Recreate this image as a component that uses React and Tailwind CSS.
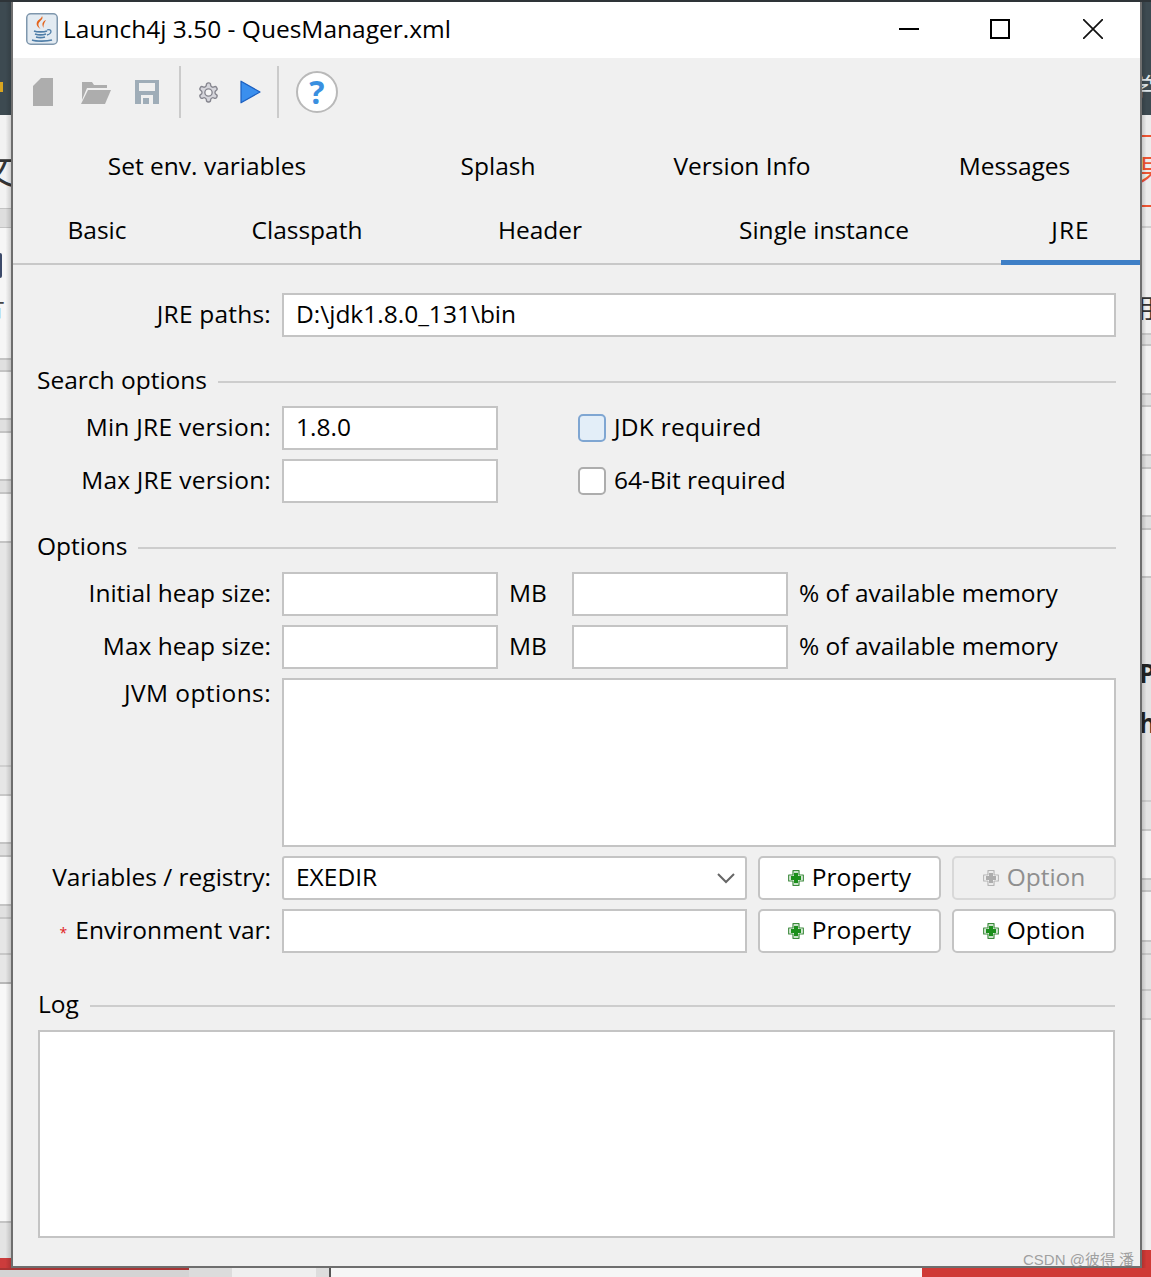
import React from 'react';

const labelCls = 'w-[258px] shrink-0 text-right mb-[2px]';
const boxCls = 'h-[44px] shrink-0 bg-white border-2 border-[#c4c4c4] px-[12px] pb-[2px] flex items-center';

// bands of the page behind the window, top to bottom
const leftBands = [
  'h-[93px] bg-[#f2f2f2]',
  'h-[20px] bg-[#dedede] border-y border-[#c4c4c4]',
  'h-[107px] bg-[#f6f6f6]',
  'h-[25px] bg-[#f6f6f6] border-b-2 border-[#c4c4c4]',
  'h-[12px] bg-[#e0e0e0] border-b-2 border-[#c4c4c4]',
  'h-[48px] bg-[#f6f6f6] border-b-2 border-[#c4c4c4]',
  'h-[13px] bg-[#e0e0e0] border-b-2 border-[#c4c4c4]',
  'h-[48px] bg-[#f6f6f6] border-b-2 border-[#c4c4c4]',
  'h-[13px] bg-[#e0e0e0] border-b-2 border-[#c4c4c4]',
  'h-[49px] bg-[#f6f6f6] border-b-2 border-[#c4c4c4]',
  'h-[224px] bg-[#e6e6e6] border-b-2 border-[#d0d0d0]',
  'h-[29px] bg-[#e6e6e6] border-b-2 border-[#c8c8c8]',
  'h-[48px] bg-[#f8f8f8] border-b-2 border-[#c4c4c4]',
  'h-[13px] bg-[#e0e0e0] border-b-2 border-[#c4c4c4]',
  'h-[49px] bg-[#f8f8f8] border-b-2 border-[#c4c4c4]',
  'h-[13px] bg-[#e0e0e0] border-b-2 border-[#c8c8c8]',
  'h-[36px] bg-[#e6e6e6] border-b-2 border-[#c8c8c8]',
  'h-[29px] bg-[#e6e6e6] border-b-2 border-[#b8b8b8]',
  'h-[239px] bg-[#f8f8f8] border-b-2 border-[#c4c4c4]',
  'h-[35px] bg-[#e4e4e4]',
  'h-[10px] bg-[#cc3c3c]',
];

const rightBands = [
  'h-[21px] bg-[#ececec] border-b-2 border-[#cfcfcf]',
  'h-[107px] bg-[#f0f0f0] border-b-2 border-[#c8c8c8]',
  'h-[11px] bg-[#e0e0e0] border-b-2 border-[#c4c4c4]',
  'h-[49px] bg-[#f2f2f2] border-b-2 border-[#c4c4c4]',
  'h-[12px] bg-[#e0e0e0] border-b-2 border-[#c4c4c4]',
  'h-[49px] bg-[#f2f2f2] border-b-2 border-[#c4c4c4]',
  'h-[13px] bg-[#e0e0e0] border-b-2 border-[#c4c4c4]',
  'h-[48px] bg-[#f2f2f2] border-b-2 border-[#c4c4c4]',
  'h-[13px] bg-[#e0e0e0] border-b-2 border-[#c4c4c4]',
  'h-[48px] bg-[#f2f2f2] border-b-2 border-[#c4c4c4]',
  'h-[224px] bg-[#e4e4e4] border-b-2 border-[#cccccc]',
  'h-[29px] bg-[#e4e4e4] border-b-2 border-[#c8c8c8]',
  'h-[49px] bg-[#f2f2f2] border-b-2 border-[#c4c4c4]',
  'h-[12px] bg-[#e0e0e0] border-b-2 border-[#c4c4c4]',
  'h-[50px] bg-[#f2f2f2] border-b-2 border-[#c4c4c4]',
  'h-[13px] bg-[#e2e2e2] border-b-2 border-[#c8c8c8]',
  'h-[36px] bg-[#e4e4e4] border-b-2 border-[#c8c8c8]',
  'h-[29px] bg-[#e4e4e4] border-b-2 border-[#c8c8c8]',
  'h-[230px] bg-[#f0f0f0]',
  'h-[18px] bg-[#cf3a36]',
];

const Plus = ({ disabled }) => {
  const fill = disabled ? '#adadad' : '#1c8f1c';
  const edge = disabled ? '#b4b4b4' : '#3c8a3c';
  return (
    <svg width="16" height="16" viewBox="0 0 16 16">
      <path d="M5 .7h6V5h4.300v6H11v4.300H5V11H.7V5H5z" fill="#fff" stroke={edge} strokeWidth="1.200" strokeLinejoin="round" />
      <path d="M6 2.800h4V6h3.200v4H10v3.200H6V10H2.800V6H6z" fill={fill} />
    </svg>
  );
};

const AddButton = ({ label, width, disabled }) => (
  <div className={`h-[44px] ${width} shrink-0 rounded-[5px] border-2 flex items-center justify-center gap-[8px] ${disabled ? 'bg-[#efefef] border-[#d8d8d8] text-[#8f8f8f]' : 'bg-white border-[#c4c4c4] text-black'}`}>
    <Plus disabled={disabled} />
    <span className="mb-[2px]">{label}</span>
  </div>
);

const Section = ({ title, className }) => (
  <div className={`flex items-center gap-[11px] h-[36px] ${className}`}>
    <span className="shrink-0 mb-[2px]">{title}</span>
    <div className="h-[2px] flex-1 bg-[#cdcdcd] mt-[2px]" />
  </div>
);

const Tab = ({ label, width }) => (
  <div className={`${width} h-[64px] flex items-center justify-center shrink-0`}>
    {label}
  </div>
);

const Toolbar = () => (
  <div className="h-[68px] flex items-center">
    <svg className="ml-[20px]" width="20" height="28" viewBox="0 0 20 28"><path d="M0 8 8 0h12v28H0z M8 0v8H0z" fill="#adadad" /></svg>
    <svg className="ml-[28px]" width="30" height="24" viewBox="0 0 30 24"><path d="M1 7V2h10l2 3h13v3H6L1 20z" fill="#adadad" /><path d="M7 10h23l-6 14H0z" fill="#adadad" /></svg>
    <svg className="ml-[24px]" width="24" height="24" viewBox="0 0 24 24"><path d="M0 0h24v24H0z" fill="#9fadb8" /><path d="M4 3h16v8H4z" fill="#f0f0f0" /><path d="M6 15h12v9H6z" fill="#f0f0f0" /><path d="M8 18h6v6H8z" fill="#9fadb8" /></svg>
    <div className="ml-[20px] w-[2px] h-[52px] bg-[#cbcbcb]" />
    <svg className="ml-[16px]" width="23" height="23" viewBox="0 0 24 24" fill="#d6d6dc" stroke="#85858e" strokeWidth="1.400" strokeLinejoin="round">
      <path d="M12.200 2h-.4a2 2 0 0 0-2 2v.2a2 2 0 0 1-1 1.700l-.4.3a2 2 0 0 1-2 0l-.2-.1a2 2 0 0 0-2.700.7l-.2.4a2 2 0 0 0 .7 2.700l.2.1a2 2 0 0 1 1 1.700v.5a2 2 0 0 1-1 1.700l-.2.1a2 2 0 0 0-.7 2.700l.2.4a2 2 0 0 0 2.700.7l.2-.1a2 2 0 0 1 2 0l.4.3a2 2 0 0 1 1 1.700v.2a2 2 0 0 0 2 2h.4a2 2 0 0 0 2-2v-.2a2 2 0 0 1 1-1.700l.4-.3a2 2 0 0 1 2 0l.2.1a2 2 0 0 0 2.700-.7l.2-.4a2 2 0 0 0-.7-2.700l-.2-.1a2 2 0 0 1-1-1.700v-.5a2 2 0 0 1 1-1.700l.2-.1a2 2 0 0 0 .7-2.700l-.2-.4a2 2 0 0 0-2.700-.7l-.2.1a2 2 0 0 1-2 0l-.4-.3a2 2 0 0 1-1-1.700V4a2 2 0 0 0-2-2z" />
      <circle cx="12" cy="12" r="3.800" fill="#f6f6f6" />
    </svg>
    <svg className="ml-[20px]" width="21" height="24" viewBox="0 0 21 24"><path d="M1 1.200 20 12 1 22.800z" fill="#3a8fee" stroke="#1c5fc0" strokeWidth="1.200" strokeLinejoin="round" /></svg>
    <div className="ml-[16px] w-[2px] h-[52px] bg-[#cbcbcb]" />
    <div className="ml-[17px] w-[42px] h-[42px] rounded-full bg-white border-2 border-[#b9b9b9] flex items-center justify-center text-[#3a8fe0] text-[32px] font-bold leading-none">?</div>
  </div>
);

const JavaIcon = () => (
  <svg width="32" height="32" viewBox="0 0 32 32">
    <rect x="0.750" y="0.750" width="30.500" height="30.500" rx="4" fill="#e3ebf2" stroke="#7f97ad" strokeWidth="1.500" />
    <path d="M16 3c2.500 3.500-4.500 5.500-3.500 9.500.3 1.200 1 2.400 2 3.500-4-2.500-5-5.500-2.500-8.500 1.500-1.500 4-2.500 4-4.500z" fill="#e4641c" />
    <path d="M20 7c-3.500 1.500-4.500 4-2.500 8-.2-2.500.4-5 2.500-8z" fill="#e4641c" />
    <path d="M8 18c3 1.200 10 1.200 13 0 M9 21c3 1 8 1 11 0 M10 24c3 .8 6 .8 9 0 M6 27c4 1.500 15 1.500 20 0" fill="none" stroke="#4f7ea8" strokeWidth="1.600" />
    <path d="M21 17c5-1.500 5.500 3.500 0 5" fill="none" stroke="#4f7ea8" strokeWidth="1.300" />
  </svg>
);

const App = () => (
  <div className="relative w-[1151px] h-[1277px] overflow-hidden bg-[#e6e6e6] text-[24.5px] text-black" style={{ fontFamily: '"Open Sans", "Noto Sans CJK SC", sans-serif' }}>
    <div className="h-[2px] bg-[#2e3438]" />
    <div className="flex h-[1266px]">
      {/* page behind the window, left edge */}
      <div className="relative w-[11px] shrink-0 flex flex-col overflow-hidden">
        <div className="h-[113px] shrink-0 bg-[#3d4a51]"><div className="w-[3px] h-[10px] bg-[#d9a520] mt-[80px]" /></div>
        {leftBands.map((cls, i) => (
          <div key={i} className={`${cls} shrink-0`} />
        ))}
        <div className="absolute top-[147px] left-[-22px] text-[36px] leading-[44px] text-[#333]">文</div>
        <div className="absolute top-[251px] left-0 w-[2px] h-[25px] rounded-r bg-[#3c4a6a]" />
        <div className="absolute top-[290px] left-[-18px] text-[24px] leading-[30px] text-[#444]">片</div>
        <div className="absolute inset-0 bg-linear-to-r from-transparent via-transparent to-black/15" />
      </div>
      {/* the window */}
      <div className="w-[1131px] shrink-0 bg-[#f0f0f0] border-x-2 border-b-2 border-[#6e6e6e] z-10">
        <div className="h-[56px] bg-white flex items-center pl-[13px] pb-[2px]">
          <JavaIcon />
          <span className="ml-[5px] flex-1">Launch4j 3.50 - QuesManager.xml</span>
          <svg width="20" height="20" viewBox="0 0 20 20"><path d="M0 10h20" stroke="#000" strokeWidth="2" /></svg>
          <svg className="mr-[73px] ml-[71px]" width="20" height="20" viewBox="0 0 20 20"><path d="M1 1h18v18H1z" fill="none" stroke="#000" strokeWidth="2" /></svg>
          <svg className="mr-[37px]" width="20" height="20" viewBox="0 0 20 20"><path d="M0 0l20 20M20 0 0 20" stroke="#111" strokeWidth="1.700" /></svg>
        </div>
        <Toolbar />

        <div className="flex h-[64px] mt-[8px]">
          <Tab label="Set env. variables" width="w-[388px]" />
          <Tab label="Splash" width="w-[194px]" />
          <Tab label="Version Info" width="w-[294px]" />
          <Tab label="Messages" width="w-[251px]" />
        </div>
        <div className="flex h-[67px] border-b-2 border-[#c8c8c8]">
          <Tab label="Basic" width="w-[168px]" />
          <Tab label="Classpath" width="w-[252px]" />
          <Tab label="Header" width="w-[214px]" />
          <Tab label="Single instance" width="w-[354px]" />
          <div className="w-[139px] h-[67px] shrink-0 flex items-center justify-center border-b-[5px] border-[#3e7fc6] pt-[3px] tracking-[1px]">JRE</div>
        </div>

        <div className="pr-[24px] pt-[28px]">
          <div className="flex items-center gap-[11px]">
            <span className={`${labelCls} tracking-[0.2px]`}>JRE paths:</span>
            <div className={`${boxCls} flex-1`}>D:\jdk1.8.0_131\bin</div>
          </div>

          <Section title="Search options" className="ml-[24px] mt-[26px]" />

          <div className="flex items-center gap-[11px] mt-[7px]">
            <span className={`${labelCls} tracking-[0.25px]`}>Min JRE version:</span>
            <div className={`${boxCls} w-[216px]`}>1.8.0</div>
            <div className="ml-[69px] w-[28px] h-[28px] shrink-0 rounded-[5px] bg-[#e3eef8] border-2 border-[#7fa6d2]" />
            <span className="-ml-[3px] mb-[2px] tracking-[0.25px]">JDK required</span>
          </div>
          <div className="flex items-center gap-[11px] mt-[9px]">
            <span className={`${labelCls} tracking-[0.2px]`}>Max JRE version:</span>
            <div className={`${boxCls} w-[216px]`} />
            <div className="ml-[69px] w-[28px] h-[28px] shrink-0 rounded-[5px] bg-white border-2 border-[#adadad]" />
            <span className="-ml-[3px] mb-[2px]">64-Bit required</span>
          </div>

          <Section title="Options" className="ml-[24px] mt-[26px]" />

          <div className="flex items-center gap-[11px] mt-[7px]">
            <span className={labelCls}>Initial heap size:</span>
            <div className={`${boxCls} w-[216px]`} />
            <span className="w-[52px] mb-[2px]">MB</span>
            <div className={`${boxCls} w-[216px]`} />
            <span className="mb-[2px]">% of available memory</span>
          </div>
          <div className="flex items-center gap-[11px] mt-[9px]">
            <span className={labelCls}>Max heap size:</span>
            <div className={`${boxCls} w-[216px]`} />
            <span className="w-[52px] mb-[2px]">MB</span>
            <div className={`${boxCls} w-[216px]`} />
            <span className="mb-[2px]">% of available memory</span>
          </div>
          <div className="flex items-start gap-[11px] mt-[9px]">
            <span className={`${labelCls} mt-[-3px] tracking-[0.4px]`}>JVM options:</span>
            <div className="h-[169px] flex-1 bg-white border-2 border-[#c4c4c4]" />
          </div>
          <div className="flex items-center gap-[11px] mt-[9px]">
            <span className={labelCls}>Variables / registry:</span>
            <div className="h-[44px] w-[465px] shrink-0 bg-white border-2 border-[#c4c4c4] rounded-[3px] pl-[12px] pr-[9px] flex items-center justify-between">
              <span className="mb-[2px]">EXEDIR</span>
              <svg width="20" height="12" viewBox="0 0 20 12"><path d="M2 2l8 8 8-8" fill="none" stroke="#666" strokeWidth="2" /></svg>
            </div>
            <AddButton label="Property" width="w-[183px]" />
            <AddButton label="Option" width="w-[164px]" disabled />
          </div>
          <div className="flex items-center gap-[11px] mt-[9px]">
            <span className={labelCls}><span className="text-[#e02020] text-[14px] align-middle mr-[8px]">*</span>Environment var:</span>
            <div className={`${boxCls} w-[465px]`} />
            <AddButton label="Property" width="w-[183px]" />
            <AddButton label="Option" width="w-[164px]" />
          </div>
        </div>

        <div className="pl-[25px] pr-[25px]">
          <Section title="Log" className="mt-[34px]" />
          <div className="h-[208px] mt-[7px] bg-white border-2 border-[#c4c4c4]" />
        </div>
      </div>
      {/* page behind the window, right edge */}
      <div className="relative flex-1 flex flex-col overflow-hidden">
        <div className="h-[113px] shrink-0 bg-[#3d4a51]" />
        <div className="h-[22px] shrink-0 bg-[#ececec] border-b-2 border-[#ee5533]" />
        <div className="h-[70px] shrink-0 bg-[#ececec] border-b-2 border-[#ee5533]" />
        {rightBands.map((cls, i) => (
          <div key={i} className={`${cls} shrink-0`} />
        ))}
        <div className="absolute top-[70px] left-[-14px] text-[26px] leading-[30px] text-[#dfe6ea]">学</div>
        <div className="absolute top-[150px] left-[-4px] text-[30px] leading-[36px] text-[#ee5533]">果</div>
        <div className="absolute top-[287px] left-[-13px] text-[26px] text-[#333]">用</div>
        <div className="absolute top-[652px] left-[-3px] text-[26px] font-bold text-[#222]">P</div>
        <div className="absolute top-[702px] left-[-3px] text-[26px] font-bold text-[#222]">h</div>
        <div className="absolute inset-0 bg-linear-to-l from-transparent via-transparent to-black/15" />
      </div>
    </div>
    <div className="flex h-[9px]">
      <div className="w-[189px] flex flex-col">
        <div className="h-[2px] bg-[#a83434]" />
        <div className="flex-1 bg-[#d4d4d4]" />
      </div>
      <div className="w-[43px] bg-[#dcdcdc]" />
      <div className="w-[84px] bg-[#efefef]" />
      <div className="w-[15px] bg-[#dddddd] border-r-2 border-[#555]" />
      <div className="w-[591px] bg-[#f6f6f6]" />
      <div className="flex-1 bg-[#cf3a36]" />
    </div>
    <div className="absolute z-20 left-[1023px] top-[1249px] text-[15px] text-[#8a8a8a]/80" style={{ fontFamily: '"Liberation Sans", "Noto Sans CJK SC", sans-serif' }}>CSDN @彼得 潘</div>
  </div>
);

export default App;
